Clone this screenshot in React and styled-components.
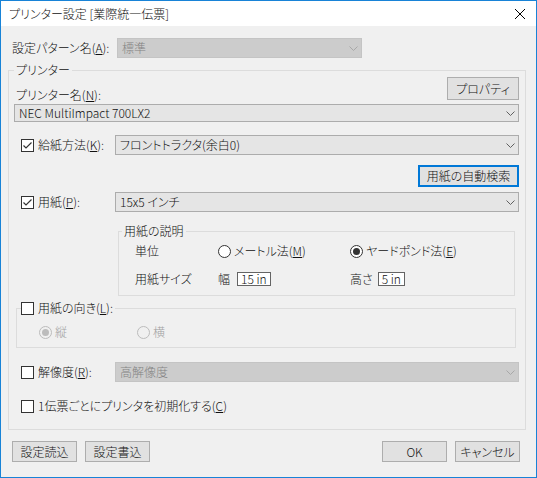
import React from 'react'
import styled, { createGlobalStyle } from 'styled-components'

const GlobalStyle = createGlobalStyle`
  html, body {
    margin: 0;
    padding: 0;
    background: #ffffff;
  }
  body {
    font-family: "Noto Sans CJK JP", "Noto Sans", sans-serif;
    font-size: 12px;
    font-weight: 300;
    font-feature-settings: "palt" 1;
    color: #111;
  }
`

const Window = styled.div`
  width: 537px;
  height: 478px;
  box-sizing: border-box;
  border: 1px solid #1883d7;
  background: #f0f0f0;
  display: flex;
  flex-direction: column;
  line-height: 16px;
`

const TitleBar = styled.div`
  height: 25px;
  background: #ffffff;
  display: flex;
  align-items: center;
  justify-content: space-between;
  padding-left: 8px;
`

const Close = styled.svg`
  margin-right: 11px;
`

const Body = styled.div`
  flex: 1;
  display: flex;
  flex-direction: column;
  padding: 0 10px 0 7px;
`

const TopRow = styled.div`
  display: flex;
  align-items: center;
  margin-top: 12px;
  padding-left: 4px;
`

const FieldLabel = styled.span`
  width: ${p => p.$w || 105}px;
  flex-shrink: 0;
`

const SelectBox = styled.div`
  box-sizing: border-box;
  height: 20px;
  width: ${p => (p.$w ? p.$w + 'px' : 'auto')};
  flex: ${p => (p.$w ? 'none' : '1')};
  display: flex;
  align-items: center;
  justify-content: space-between;
  padding: 0 3px 0 4px;
  border: 1px solid ${p => (p.$disabled ? '#c4c4c4' : '#acacac')};
  background: ${p => (p.$disabled ? '#cccccc' : '#e5e5e5')};
  color: ${p => (p.$disabled ? '#838383' : '#111')};
  margin-top: ${p => p.$mt || 0}px;
`

const Group = styled.fieldset`
  margin: ${p => p.$m || '0'};
  padding: ${p => p.$p || '0'};
  border: 1px solid #dcdcdc;
  min-width: 0;
`

const Legend = styled.legend`
  padding: ${p => p.$p || '0 2px'};
  line-height: 14px;
  height: 14px;
  display: flex;
  align-items: center;
`

const Stack = styled.div`
  display: flex;
  flex-direction: column;
`

const NameRow = styled.div`
  display: flex;
  justify-content: space-between;
  align-items: flex-end;
  padding-left: 2px;
`

const NameLabel = styled.span`
  margin-bottom: -3px;
`

const Button = styled.button`
  box-sizing: border-box;
  width: ${p => p.$w || 65}px;
  height: ${p => p.$h || 21}px;
  padding: 0;
  font: inherit;
  font-feature-settings: "palt" 1;
  line-height: 16px;
  color: #111;
  background: #e1e1e1;
  border: ${p => (p.$focus ? '2px solid #0078d7' : '1px solid #adadad')};
  align-self: ${p => (p.$right ? 'flex-end' : 'auto')};
  margin-top: ${p => p.$mt || 0}px;
`

const CheckRow = styled.div`
  display: flex;
  align-items: center;
  padding-left: 7px;
  margin-top: ${p => p.$mt || 0}px;
`

const CheckLabel = styled.label`
  display: inline-flex;
  align-items: center;
  gap: 4px;
  width: ${p => (p.$w ? p.$w + 'px' : 'auto')};
  flex-shrink: 0;
`

const Box = styled.span`
  box-sizing: border-box;
  width: 13px;
  height: 13px;
  border: 1px solid #333333;
  background: #ffffff;
  display: inline-flex;
  align-items: center;
  justify-content: center;
`

const Round = styled.span`
  box-sizing: border-box;
  width: 13px;
  height: 13px;
  border-radius: 50%;
  border: 1px solid ${p => (p.$disabled ? '#bcbcbc' : '#333333')};
  background: ${p => (p.$disabled ? '#f0f0f0' : '#ffffff')};
  display: inline-flex;
  align-items: center;
  justify-content: center;
  &::after {
    content: '';
    width: 7px;
    height: 7px;
    border-radius: 50%;
    background: ${p => (p.$disabled ? '#bcbcbc' : '#333333')};
    display: ${p => (p.$on ? 'block' : 'none')};
  }
`

const RadioLabel = styled.label`
  display: inline-flex;
  align-items: center;
  gap: 3px;
  color: ${p => (p.$disabled ? '#a0a0a0' : '#111')};
  width: ${p => (p.$w ? p.$w + 'px' : 'auto')};
`

const PaperGrid = styled.div`
  display: grid;
  grid-template-columns: 83px 132px 1fr;
  row-gap: 12px;
  padding-left: 13px;
`

const SizeCell = styled.span`
  display: inline-flex;
  align-items: center;
  gap: ${p => p.$gap || 7}px;
`

const SizeBox = styled.span`
  box-sizing: border-box;
  height: 14px;
  line-height: 12px;
  padding: 0 3px;
  border: 1px solid #646464;
  background: #ffffff;
`

const RadioRow = styled.div`
  display: flex;
  padding-left: 18px;
`

const Footer = styled.div`
  display: flex;
  justify-content: space-between;
  margin-top: 11px;
  padding: 0 6px 0 4px;
`

const ButtonGroup = styled.div`
  display: flex;
  gap: 8px;
`

const Chevron = ({ disabled }) => (
  <svg width="9" height="5" viewBox="0 0 9 5">
    <polyline points="0.5,0.5 4.5,4.5 8.5,0.5" fill="none" stroke={disabled ? '#a8a8a8' : '#606060'} strokeWidth="1" />
  </svg>
)

const Select = ({ children, disabled, w, mt }) => (
  <SelectBox $disabled={disabled} $w={w} $mt={mt}>
    <span>{children}</span>
    <Chevron disabled={disabled} />
  </SelectBox>
)

const Check = ({ on }) => (
  <Box>
    {on && (
      <svg width="11" height="11" viewBox="0 0 11 11">
        <polyline points="1.5,5.5 4,8 9.5,2.5" fill="none" stroke="#333" strokeWidth="1.2" />
      </svg>
    )}
  </Box>
)

export default function App() {
  return (
    <>
      <GlobalStyle />
      <Window>
        <TitleBar>
          <span>プリンター設定 [業際統一伝票]</span>
          <Close width="10" height="10" viewBox="0 0 10 10">
            <line x1="0" y1="0" x2="10" y2="10" stroke="#000" strokeWidth="1" />
            <line x1="10" y1="0" x2="0" y2="10" stroke="#000" strokeWidth="1" />
          </Close>
        </TitleBar>
        <Body>
          <TopRow>
            <FieldLabel>設定パターン名(<u>A</u>):</FieldLabel>
            <Select disabled w={245}>標準</Select>
          </TopRow>

          <Group $m="5px 0 0 0" $p="0 6px 15px 5px">
            <Legend>プリンター</Legend>
            <Stack>
              <NameRow>
                <NameLabel>プリンター名(<u>N</u>):</NameLabel>
                <Button $w={72} $h={23}>プロパティ</Button>
              </NameRow>
              <Select mt={4}>NEC MultiImpact 700LX2</Select>

              <CheckRow $mt={13}>
                <CheckLabel $w={94}><Check on /><span>給紙方法(<u>K</u>):</span></CheckLabel>
                <Select>フロントトラクタ(余白0)</Select>
              </CheckRow>

              <Button $w={101} $h={22} $focus $right $mt={10}>用紙の自動検索</Button>

              <CheckRow $mt={5}>
                <CheckLabel $w={94}><Check on /><span>用紙(<u>P</u>):</span></CheckLabel>
                <Select>15x5 インチ</Select>
              </CheckRow>

              <Group $m="12px 4px 0 104px" $p="5px 4px 8px 3px">
                <Legend>用紙の説明</Legend>
                <PaperGrid>
                  <span>単位</span>
                  <RadioLabel><Round /><span>メートル法(<u>M</u>)</span></RadioLabel>
                  <RadioLabel><Round $on /><span>ヤードポンド法(<u>E</u>)</span></RadioLabel>
                  <span>用紙サイズ</span>
                  <SizeCell><span>幅</span><SizeBox>15 in</SizeBox></SizeCell>
                  <SizeCell $gap={5}><span>高さ</span><SizeBox>5 in</SizeBox></SizeCell>
                </PaperGrid>
              </Group>

              <Group $m="5px 3px 0 2px" $p="9px 4px 7px 4px">
                <Legend $p="0 2px 0 0">
                  <CheckLabel><Check /><span>用紙の向き(<u>L</u>):</span></CheckLabel>
                </Legend>
                <RadioRow>
                  <RadioLabel $disabled $w={98}><Round $disabled $on /><span>縦</span></RadioLabel>
                  <RadioLabel $disabled><Round $disabled /><span>横</span></RadioLabel>
                </RadioRow>
              </Group>

              <CheckRow $mt={14}>
                <CheckLabel $w={94}><Check /><span>解像度(<u>R</u>):</span></CheckLabel>
                <Select disabled>高解像度</Select>
              </CheckRow>

              <CheckRow $mt={16}>
                <CheckLabel><Check /><span>1伝票ごとにプリンタを初期化する(<u>C</u>)</span></CheckLabel>
              </CheckRow>
            </Stack>
          </Group>

          <Footer>
            <ButtonGroup>
              <Button>設定読込</Button>
              <Button>設定書込</Button>
            </ButtonGroup>
            <ButtonGroup>
              <Button>OK</Button>
              <Button>キャンセル</Button>
            </ButtonGroup>
          </Footer>
        </Body>
      </Window>
    </>
  )
}
